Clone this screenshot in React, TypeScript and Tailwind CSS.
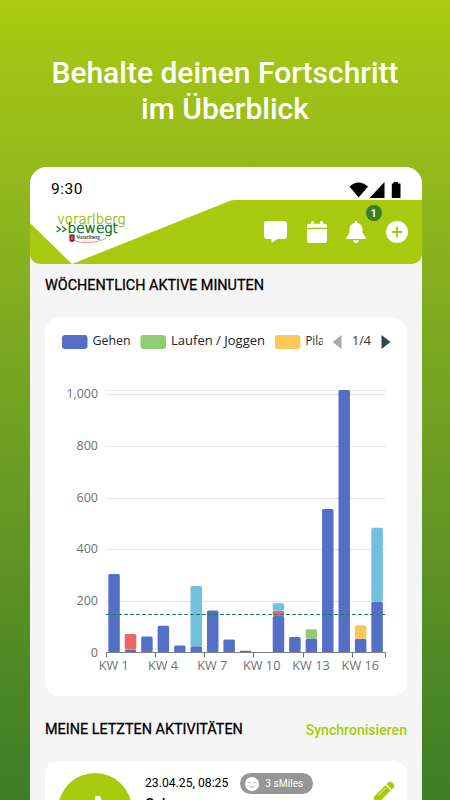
import * as React from "react";

const BLUE = "#5470c6";
const GREEN = "#91cc75";
const YELLOW = "#fac858";
const RED = "#ee6666";
const CYAN = "#73c0de";

// minutes per calendar week, stacked from the bottom up
const weeks = [
    [{ color: BLUE, value: 304 }],
    [{ color: BLUE, value: 12 }, { color: RED, value: 60 }],
    [{ color: BLUE, value: 62 }],
    [{ color: BLUE, value: 104 }],
    [{ color: BLUE, value: 27 }],
    [{ color: BLUE, value: 24 }, { color: CYAN, value: 234 }],
    [{ color: BLUE, value: 163 }],
    [{ color: BLUE, value: 50 }],
    [{ color: BLUE, value: 7 }],
    [],
    [{ color: BLUE, value: 141 }, { color: RED, value: 21 }, { color: CYAN, value: 29 }],
    [{ color: BLUE, value: 60 }],
    [{ color: BLUE, value: 54 }, { color: GREEN, value: 36 }],
    [{ color: BLUE, value: 556 }],
    [{ color: BLUE, value: 1017 }],
    [{ color: BLUE, value: 53 }, { color: YELLOW, value: 53 }],
    [{ color: BLUE, value: 197 }, { color: CYAN, value: 286 }],
];

const yLabels = [
    { label: "0", width: 7.3 },
    { label: "200", width: 21.5 },
    { label: "400", width: 21.5 },
    { label: "600", width: 21.5 },
    { label: "800", width: 21.5 },
    { label: "1,000", width: 31.5 },
];

const LEFT = 61;
const RIGHT = 340.5;
const BASE = 334.5;
const SCALE = 0.2582;
const BAND = (RIGHT - LEFT) / weeks.length;

function Chart() {
    return (
        <svg className="block h-[378px] w-[362px] font-['Open_Sans','Noto_Sans',sans-serif]" viewBox="0 0 362 378">
            <defs>
                <clipPath id="legend">
                    <rect x="0" y="0" width="277.5" height="50" />
                </clipPath>
            </defs>

            <g clipPath="url(#legend)" fontSize="13" fill="#222">
                <rect x="17" y="17" width="25.5" height="14" rx="3" fill={BLUE} />
                <text x="47.5" y="27.3" textLength="38" lengthAdjust="spacingAndGlyphs">Gehen</text>
                <rect x="95.5" y="17" width="25.5" height="14" rx="3" fill={GREEN} />
                <text x="126" y="27.3" textLength="94" lengthAdjust="spacingAndGlyphs">Laufen / Joggen</text>
                <rect x="230" y="17" width="25.5" height="14" rx="3" fill={YELLOW} />
                <text x="260.5" y="27.3" textLength="34.5" lengthAdjust="spacingAndGlyphs">Pilates</text>
            </g>
            <path d="M287.5 24 296.5 17V31Z" fill="#aaa" />
            <text x="307" y="27.3" fontSize="13" fill="#333" textLength="19" lengthAdjust="spacingAndGlyphs">1/4</text>
            <path d="M345.5 24 336.5 17V31Z" fill="#2f4554" />

            {[200, 400, 600, 800, 1000, 1017].map((v) => (
                <path key={v} d={`M${LEFT} ${Math.round(BASE - v * SCALE) + 0.5}H${RIGHT}`} stroke="#e2e4f0" />
            ))}
            <g fontSize="13" fill="#6e7079" textAnchor="end">
                {yLabels.map(({ label, width }, i) => (
                    <text key={label} x="53" y={BASE + 4 - i * 200 * SCALE} textLength={width} lengthAdjust="spacingAndGlyphs">{label}</text>
                ))}
            </g>

            {weeks.map((segments, i) => {
                let total = 0;
                return segments.map((s, j) => {
                    total += s.value;
                    return (
                        <rect
                            key={`${i}-${j}`}
                            x={LEFT + i * BAND + 2.3}
                            y={BASE - total * SCALE}
                            width="11.5"
                            height={s.value * SCALE}
                            rx={Math.min(1.6, (s.value * SCALE) / 2)}
                            fill={s.color}
                        />
                    );
                });
            })}

            <path d={`M${LEFT} ${BASE}H${RIGHT}`} stroke="#7d8089" />
            {[0, 3, 6, 9, 12, 15, 17].map((n) => (
                <path key={n} d={`M${Math.floor(LEFT + n * BAND) + 0.5} ${BASE}v5`} stroke="#6e7079" />
            ))}
            <g fontSize="13" fill="#6e7079" textAnchor="middle">
                {[1, 4, 7, 10, 13, 16].map((n) => (
                    <text
                        key={n}
                        x={LEFT + (n - 0.5) * BAND - 0.5}
                        y="352.3"
                        textLength={n > 9 ? 37.5 : 30}
                        lengthAdjust="spacingAndGlyphs"
                    >
                        KW {n}
                    </text>
                ))}
            </g>
            <path d={`M${LEFT} 296.5H${RIGHT}`} stroke="#1d8264" strokeWidth="1.2" strokeDasharray="4 2" />
        </svg>
    );
}

function Logo() {
    return (
        <svg className="block h-[64px] w-[210px] shrink-0" viewBox="0 0 210 64">
            <path d="M0 0H205Q202 0 199 1.3L42 64 0 23Z" fill="#fff" />
            <g className="font-['DejaVu_Sans',sans-serif]" fontWeight="200">
                <text x="27" y="24" fontSize="14.5" fill="#a5c51c" stroke="#a5c51c" strokeWidth=".5" textLength="68.5" lengthAdjust="spacingAndGlyphs">vorarlberg</text>
                <text x="37.5" y="33" fontSize="14" fill="#17802e" stroke="#17802e" strokeWidth=".6" textLength="50.5" lengthAdjust="spacingAndGlyphs">bewegt</text>
            </g>
            <path d="M26.5 26.5 30.5 29.2 26.5 32M32 26.5 36 29.2 32 32" fill="none" stroke="#17802e" strokeWidth="1.3" />
            <path d="M38.5 35.5C44 45 67 44 76 38" fill="none" stroke="#dc7780" strokeWidth=".8" />
            <path d="M39.5 34.5H44.5V40.5Q42 43.5 39.5 40.5Z" fill="#8a1f2b" />
            <path d="M41 36.5H43V40H41Z" fill="#d35b62" />
            <text className="font-['Liberation_Serif',serif]" x="46" y="38.9" fontSize="5.6" fill="#333" stroke="#333" strokeWidth=".1" textLength="24" lengthAdjust="spacingAndGlyphs">Vorarlberg</text>
            <path d="M52 41H64" stroke="#ccc" strokeWidth=".6" />
        </svg>
    );
}

function PlusIcon() {
    return (
        <svg className="size-[22px]" viewBox="0 0 22 22">
            <circle cx="11" cy="11" r="11" fill="#fff" />
            <path d="M11 6.5V15.5M6.5 11H15.5" stroke="#a9c90e" strokeWidth="1.8" strokeLinecap="round" />
        </svg>
    );
}

function CommentIcon() {
    return (
        <svg className="h-[22px] w-[23px]" viewBox="0 0 23 22">
            <path d="M3 0H20Q23 0 23 3V15Q23 18 20 18H13.5L7.5 22V18H3Q0 18 0 15V3Q0 0 3 0Z" fill="#fff" />
        </svg>
    );
}

function CalendarIcon() {
    return (
        <svg className="h-[22px] w-5" viewBox="0 0 20 22">
            <path d="M5.5 0Q7 0 7 1.3V2.7H13V1.3Q13 0 14.5 0 16 0 16 1.3V2.7H17.5Q20 2.7 20 5V6.7H0V5Q0 2.7 2.5 2.7H4V1.3Q4 0 5.5 0ZM0 8.2H20V20Q20 22 18 22H2Q0 22 0 20Z" fill="#fff" />
        </svg>
    );
}

function BellIcon() {
    return (
        <svg className="h-[22px] w-5" viewBox="0 0 20 22">
            <path d="M10 0Q11.3 0 11.3 1.3V2Q16.5 3.2 16.5 8.7C16.5 13 18 14.3 19.5 15.9 20.5 17.3 19.7 18 18.5 18H1.5C.3 18-.5 17.3.5 15.9 2 14.3 3.5 13 3.5 8.7Q3.5 3.2 8.7 2V1.3Q8.7 0 10 0ZM7.2 19.2H12.8Q12.5 22 10 22T7.2 19.2Z" fill="#fff" />
        </svg>
    );
}

function PencilIcon() {
    return (
        <svg className="mt-2 size-[22px] shrink-0" viewBox="0 0 22 22">
            <path d="M15.3 1.4Q17.3-.5 19.2 1.4L20.6 2.8Q22.5 4.7 20.6 6.7L18.7 8.6 13.4 3.3ZM12.4 4.3 17.7 9.6 6.8 20.6 1 22Q-.2 22.2 0 21L1.400 15.300Z" fill="#a9c90e" />
            <path d="M5.400 14.200 12.300 7.300" stroke="#fff" strokeWidth=".8" strokeLinecap="round" />
        </svg>
    );
}

export default function App() {
    return (
        <div className="h-[800px] w-[450px] overflow-hidden bg-linear-to-b from-[#abca10] to-[#3c7d26] font-[Roboto,sans-serif] text-black">
            <h1 className="h-[167px] pt-[55px] text-center text-[30px] leading-9 font-medium text-white">
                Behalte deinen Fortschritt
                <br />
                im Überblick
            </h1>

            <main className="ml-[30px] h-[633px] w-[392px] overflow-hidden rounded-t-[17px] bg-[#f5f5f5]">
                <div className="flex h-[33px] justify-between bg-white pt-[13px] pr-[20px] pl-[21px]">
                    <span className="text-[15.5px] leading-[18px] tracking-[.5px]">9:30</span>
                    <svg className="mt-[2px] h-4 w-[53px]" viewBox="0 0 53 16">
                        <path d="M.5 4.5Q9.500-3.700 19 4.500L9.700 15.500ZM35.500 0V16H20.500ZM44.500 1.500V0H49V1.500H51.500V16H42.800V1.500Z" />
                    </svg>
                </div>

                <header className="flex h-[64px] justify-between overflow-hidden rounded-b-[10px] bg-[#a9c90e]">
                    <Logo />
                    <div className="flex items-center gap-[19.5px] pr-[14.5px]">
                        <CommentIcon />
                        <CalendarIcon />
                        <div className="relative h-[22px]">
                            <BellIcon />
                            <span className="absolute -top-4 left-[19.5px] flex size-4 items-center justify-center rounded-full bg-[#358023] text-[10px] font-bold text-white">1</span>
                        </div>
                        <PlusIcon />
                    </div>
                </header>

                <div className="px-[15px]">
                    <h2 className="pt-[13px] text-[14.4px] leading-[18px] [-webkit-text-stroke:0.3px_black]">WÖCHENTLICH AKTIVE MINUTEN</h2>
                    <section className="mt-[23px] rounded-[14px] bg-white">
                        <Chart />
                    </section>

                    <div className="mt-[25px] flex justify-between text-[14.4px] leading-[18px]">
                        <h2 className="[-webkit-text-stroke:0.3px_black]">MEINE LETZTEN AKTIVITÄTEN</h2>
                        <span className="text-[14.1px] font-medium text-[#a9c90e]">Synchronisieren</span>
                    </div>

                    <section className="mt-[22px] flex h-[90px] rounded-t-[14px] bg-white pt-3 pr-3 pl-[13px]">
                        <div className="size-[74px] shrink-0 rounded-full bg-[#a9c90e]">
                            <svg className="size-[74px]" viewBox="0 0 74 74" fill="#fff">
                                <circle cx="40" cy="26" r="3.2" />
                                <path d="M36 31H41L44 44 51 63H46L39 48 30 63H25L34 44Z" />
                            </svg>
                        </div>
                        <div className="ml-[13px] grow">
                            <div className="flex h-[21px] items-center text-[12.2px]">
                                <span>23.04.25, 08:25</span>
                                <span className="ml-3 flex h-[21px] w-[73px] items-center rounded-full bg-[#969696] pl-[5px] text-[10.2px] whitespace-nowrap text-white">
                                    <svg className="mr-[6px] size-[14px] shrink-0" viewBox="0 0 14 14">
                                        <circle cx="7" cy="7" r="7" fill="#fff" />
                                        <path d="M3 5.8Q4.3 4.5 5.6 5.8M8.4 5.8Q9.7 4.5 11 5.8M3.8 8.5Q7 12 10.2 8.5" fill="none" stroke="#969696" strokeWidth=".8" />
                                    </svg>
                                    3 sMiles
                                </span>
                            </div>
                            <p className="mt-px text-[14px] leading-[18px] font-medium">Gehen</p>
                        </div>
                        <PencilIcon />
                    </section>
                </div>
            </main>
        </div>
    );
}
